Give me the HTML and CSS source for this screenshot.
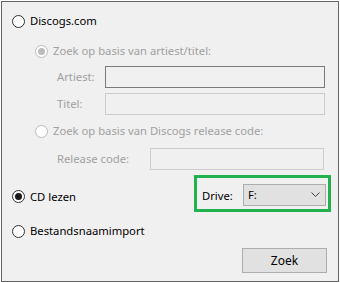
FILE: index.html
```html
<!DOCTYPE html>
<html>
<head>
<meta charset="utf-8">
<link rel="stylesheet" href="styles.css">
</head>
<body>
<div class="frame">
  <div class="row r-discogs">
    <span class="radio"></span>
    <span class="label">Discogs.com</span>
  </div>
  <div class="row r-sub1 indent disabled">
    <span class="radio checked"></span>
    <span class="label">Zoek op basis van artiest/titel:</span>
  </div>
  <div class="row r-field r-artiest disabled">
    <span class="flabel">Artiest:</span>
    <span class="input dark"></span>
  </div>
  <div class="row r-field r-titel disabled">
    <span class="flabel">Titel:</span>
    <span class="input"></span>
  </div>
  <div class="row r-sub2 indent disabled">
    <span class="radio"></span>
    <span class="label">Zoek op basis van Discogs release code:</span>
  </div>
  <div class="row r-field r-release disabled">
    <span class="flabel wide">Release code:</span>
    <span class="input"></span>
  </div>
  <div class="row r-cd">
    <div class="cd-left">
      <span class="radio checked"></span>
      <span class="label">CD lezen</span>
    </div>
    <div class="drivebox">
      <span class="dlabel">Drive:</span>
      <div class="combo">
        <span class="cval">F:</span>
        <svg class="chev" width="9" height="5" viewBox="0 0 9 5"><polyline points="0.5,0.5 4.5,4.5 8.5,0.5" fill="none" stroke="#404040" stroke-width="1"/></svg>
      </div>
    </div>
  </div>
  <div class="row r-bestand">
    <span class="radio"></span>
    <span class="label">Bestandsnaamimport</span>
  </div>
  <div class="row r-btn">
    <button class="btn">Zoek</button>
  </div>
</div>
</body>
</html>
```

FILE: styles.css
```css
html, body {
  margin: 0;
  padding: 0;
  background: #ffffff;
}
body {
  font-family: "Noto Sans", "Open Sans", sans-serif;
  font-size: 11.25px;
  color: #000;
}
.frame {
  box-sizing: border-box;
  margin: 1px 0 0 1px;
  width: 338px;
  height: 281px;
  border: 1px solid #646464;
  background: #f0f0f0;
  padding: 10px 0 0 0;
  display: flex;
  flex-direction: column;
}
.row {
  display: flex;
  align-items: center;
}
.radio {
  box-sizing: border-box;
  width: 13px;
  height: 13px;
  border-radius: 50%;
  border: 1px solid #333333;
  background: #ffffff;
  display: flex;
  align-items: center;
  justify-content: center;
  flex: none;
}
.radio.checked::after {
  content: "";
  width: 7px;
  height: 7px;
  border-radius: 50%;
  background: #1a1a1a;
}
.disabled .radio {
  border-color: #bcbcbc;
  background: #ffffff;
}
.disabled .radio.checked::after {
  background: #bcbcbc;
}
.label {
  margin-left: 5px;
  line-height: 18px;
  white-space: nowrap;
}
.disabled .label, .disabled .flabel {
  color: #a0a0a0;
}
.r-discogs {
  height: 18px;
  padding-left: 10px;
}
.indent {
  padding-left: 33px;
  height: 18px;
}
.r-sub1 { margin-top: 12px; }
.r-field {
  height: 22px;
  padding-left: 55px;
}
.flabel {
  width: 48px;
  flex: none;
  line-height: 18px;
}
.flabel.wide { width: 93px; }
.input {
  box-sizing: border-box;
  height: 22px;
  width: 220px;
  border: 1px solid #cccccc;
  background: #f0f0f0;
}
.input.dark {
  border-color: #7a7a7a;
}
.r-release .input { width: 174px; }
.r-artiest { margin-top: 6px; }
.r-titel { margin-top: 5px; }
.r-sub2 { margin-top: 7px; }
.r-release { margin-top: 8px; }
.r-cd {
  margin-top: 5px;
  height: 37px;
  padding-left: 10px;
  justify-content: space-between;
  padding-right: 7px;
}
.cd-left {
  display: flex;
  align-items: center;
  margin-top: 6px;
}
.drivebox {
  box-sizing: border-box;
  width: 137px;
  height: 37px;
  border: 3px solid #22b14c;
  display: flex;
  align-items: center;
  padding-left: 5px;
  padding-top: 2px;
}
.dlabel {
  width: 41px;
  flex: none;
  line-height: 18px;
  margin-top: 2px;
}
.combo {
  box-sizing: border-box;
  width: 83px;
  height: 22px;
  border: 1px solid #adadad;
  background: #e1e1e1;
  display: flex;
  align-items: center;
  justify-content: space-between;
  padding: 0 5px 0 4px;
}
.cval {
  line-height: 18px;
}
.chev { display: block; }
.r-bestand {
  margin-top: 10px;
  height: 18px;
  padding-left: 10px;
}
.r-btn {
  margin-top: 8px;
  justify-content: flex-end;
  padding-right: 11px;
}
.btn {
  box-sizing: border-box;
  width: 85px;
  height: 25px;
  border: 1px solid #adadad;
  background: #e1e1e1;
  font-family: inherit;
  font-size: 12px;
  color: #000;
  padding: 0;
  border-radius: 0;
}
```
